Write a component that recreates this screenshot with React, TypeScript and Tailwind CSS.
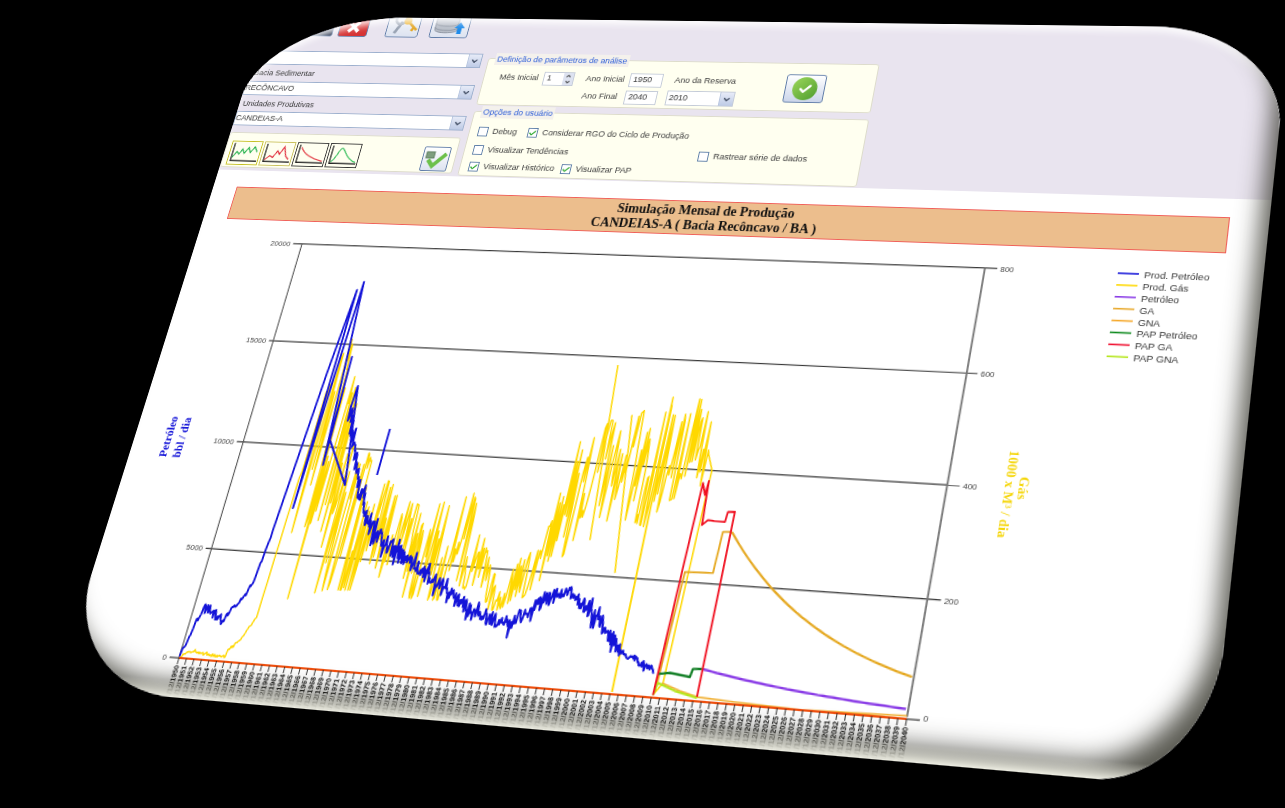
import React from "react";
import { ChevronDown, ChevronUp, Check } from "lucide-react";

type Pt = [number, number];

// flat card size and the four corners it lands on in the photo
const W = 1100;
const H = 730;
const quad: Pt[] = [[267, 16], [1290, 28], [1209, 789], [56, 687]];

const getHomography = () => {
    const [[x0, y0], [x1, y1], [x2, y2], [x3, y3]] = quad;
    const dx1 = x1 - x2, dx2 = x3 - x2, sx = x0 - x1 + x2 - x3;
    const dy1 = y1 - y2, dy2 = y3 - y2, sy = y0 - y1 + y2 - y3;
    const den = dx1 * dy2 - dx2 * dy1;
    const g = (sx * dy2 - dx2 * sy) / den;
    const h = (dx1 * sy - sx * dy1) / den;
    return {
        a: x1 - x0 + g * x1, b: x3 - x0 + h * x3, c: x0,
        d: y1 - y0 + g * y1, e: y3 - y0 + h * y3, f: y0, g, h,
    };
};

const T = getHomography();
const cardMatrix = `matrix3d(${[
    T.a / W, T.d / W, 0, T.g / W,
    T.b / H, T.e / H, 0, T.h / H,
    0, 0, 1, 0,
    T.c, T.f, 0, 1,
].join(",")})`;

// photo position -> position on the flat card
const flat = ([x, y]: Pt): Pt => {
    const p = T.a - T.g * x, q = T.b - T.h * x, r = x - T.c;
    const s = T.d - T.g * y, t = T.e - T.h * y, v = y - T.f;
    const den = p * t - q * s;
    return [((r * t - q * v) / den) * W, ((p * v - r * s) / den) * H];
};

let seed = 20;
const rnd = () => {
    seed = (seed * 16807) % 2147483647;
    return seed / 2147483647;
};

const toPath = (pts: Pt[]) => pts.map((p) => `${p[0].toFixed(1)},${p[1].toFixed(1)}`).join(" ");
const line = (pts: Pt[]) => toPath(pts.map(flat));

const interp = (pts: Pt[], x: number) => {
    if (x <= pts[0][0]) return pts[0][1];
    for (let i = 1; i < pts.length; i++) {
        if (x <= pts[i][0]) {
            const k = (x - pts[i - 1][0]) / (pts[i][0] - pts[i - 1][0] || 1);
            return pts[i - 1][1] + (pts[i][1] - pts[i - 1][1]) * k;
        }
    }
    return pts[pts.length - 1][1];
};

const sorted = (pts: Pt[]) => pts.map(flat).sort((a, b) => a[0] - b[0]);

const jagged = (anchors: Pt[], amp: number, step = 0.8): Pt[] => {
    const pts = sorted(anchors);
    const out: Pt[] = [];
    for (let x = pts[0][0]; x < pts[pts.length - 1][0]; x += step) {
        const spike = rnd() > 0.85 ? 1.8 : 1;
        out.push([x, interp(pts, x) + (rnd() - 0.5) * 2 * amp * spike]);
    }
    return out;
};

const band = (upper: Pt[], lower: Pt[], step = 1): Pt[] => {
    const up = sorted(upper);
    const low = sorted(lower);
    const out: Pt[] = [];
    const end = Math.min(up[up.length - 1][0], low[low.length - 1][0]);
    let i = 0;
    for (let x = Math.max(up[0][0], low[0][0]); x < end; x += step) {
        const slow = Math.sin(i * 0.21) * 0.2 + Math.sin(i * 0.067) * 0.16;
        const k = Math.min(1, Math.max(0, 0.5 + slow + (rnd() - 0.5) * 1.1));
        out.push([x, interp(low, x) + (interp(up, x) - interp(low, x)) * k]);
        i++;
    }
    return out;
};

// exponential decay between two photo positions
const decay = (from: Pt, to: Pt, k: number): string => {
    const a = flat(from);
    const b = flat(to);
    const out: Pt[] = [];
    for (let i = 0; i <= 40; i++) {
        const t = i / 40;
        out.push([a[0] + (b[0] - a[0]) * t, a[1] + (b[1] - a[1]) * ((1 - Math.exp(-k * t)) / (1 - Math.exp(-k)))]);
    }
    return toPath(out);
};

const bluePath = [
    ...jagged([[180, 655], [188, 640], [196, 622], [205, 608], [213, 612], [222, 622]], 5),
    ...jagged([[222, 622], [232, 608], [245, 596], [253, 582], [262, 560], [272, 534]], 3),
    ...[[273, 530], [327, 373], [357, 290], [293, 508], [364, 282], [323, 465], [352, 357], [330, 440], [345, 485], [358, 386], [350, 410]].map((p) => flat(p as Pt)),
    ...jagged([[350, 410], [352, 440], [358, 480], [366, 515], [375, 535], [400, 555]], 9),
    ...jagged([[400, 555], [430, 578], [470, 610], [510, 625], [530, 610], [545, 600], [570, 590], [590, 610], [620, 650]], 7),
    ...jagged([[620, 650], [655, 672]], 3.5),
];

const yellowPath = [
    ...jagged([[180, 657], [190, 651], [205, 654], [225, 657], [228, 650], [240, 640], [257, 617]], 1.2),
    ...band(
        [[258, 612], [275, 530], [300, 440], [325, 395], [352, 335], [358, 420], [375, 470], [400, 490], [425, 510], [450, 500], [470, 475], [490, 560], [505, 590], [530, 530], [555, 505], [575, 445], [600, 430], [612, 420], [625, 430], [650, 405], [680, 395], [705, 400], [714, 430]],
        [[258, 625], [275, 590], [290, 600], [325, 590], [360, 590], [390, 595], [420, 600], [460, 600], [490, 610], [510, 610], [530, 590], [560, 560], [580, 530], [610, 520], [630, 520], [650, 530], [670, 500], [700, 490], [714, 470]],
    ),
    ...[[712, 470], [680, 610], [663, 683], [653, 695]].map((p) => flat(p as Pt)),
];

const series = [
    { color: "#FFD800", width: 1.5, points: toPath(yellowPath) },
    { color: "#FFD800", width: 1.8, points: line([[612, 692], [672, 405]]) },
    { color: "#FFD800", width: 1.5, points: line([[615, 573], [632, 415]]) },
    { color: "#FFD800", width: 1.5, points: line([[618, 365], [590, 540]]) },
    { color: "#1414D8", width: 2, points: toPath(bluePath) },
    { color: "#1414D8", width: 2, points: line([[377, 475], [390, 429]]) },
    { color: "#E5A820", width: 1.8, points: line([[655, 692], [685, 572], [713, 573], [723, 532], [732, 532]]) },
    { color: "#E5A820", width: 2, points: decay([732, 532], [912, 677], 1.6) },
    { color: "#F2B33A", width: 1.6, points: line([[662, 683], [680, 691], [697, 697], [733, 702], [800, 710], [907, 716]]) },
    { color: "#8A3CE6", width: 2.2, points: decay([702, 669], [906, 709], 1.2) },
    { color: "#B5E61D", width: 2, points: line([[653, 695], [658, 683], [675, 691], [697, 698]]) },
    { color: "#137F26", width: 2.2, points: line([[658, 674], [670, 673], [690, 677], [693, 669], [702, 669]]) },
    { color: "#F01020", width: 1.8, points: line([[653, 695], [703, 483], [705, 495], [709, 481], [702, 525], [708, 520], [714, 521], [725, 522], [728, 512], [735, 512], [697, 697]]) },
];

const gridLeft: Pt[] = [[302, 244], [278, 341], [246, 442], [215, 549], [179, 658]];
const gridRight: Pt[] = [[985, 268], [965, 373], [947, 485], [928, 599], [907, 717]];
const leftLabels = ["20000", "15000", "10000", "5000", "0"];
const rightLabels = ["800", "600", "400", "200", "0"];

const legend = [
    { label: "Prod. Petróleo", color: "#1414D8" },
    { label: "Prod. Gás", color: "#FFD800" },
    { label: "Petróleo", color: "#8A3CE6" },
    { label: "GA", color: "#E8A92D" },
    { label: "GNA", color: "#F5A82A" },
    { label: "PAP Petróleo", color: "#0E8A1E" },
    { label: "PAP GA", color: "#F01030" },
    { label: "PAP GNA", color: "#B5E61D" },
];

const years = Array.from({ length: 91 }, (_, i) => 1950 + i);

const ProductionChart = () => {
    const [x0, axisY] = flat([179, 658]);
    const [x1] = flat([907, 717]);
    const tick = (x1 - x0) / 90;

    return (
        <svg viewBox={`0 240 ${W} ${H - 240}`} className="block h-[490px] w-full" style={{ fontFamily: '"Liberation Sans", Arial, sans-serif' }}>
            {gridLeft.map((p, i) => {
                const a = flat(p);
                const b = flat(gridRight[i]);
                return (
                    <g key={leftLabels[i]}>
                        {i < 4 && <line x1={a[0] - 10} y1={a[1]} x2={b[0] + 12} y2={b[1]} stroke="#3a3a3a" strokeWidth="1.2" />}
                        <text x={a[0] - 13} y={a[1] + 3} textAnchor="end" fontSize="8" fill="#444">{leftLabels[i]}</text>
                        <text x={b[0] + 15} y={b[1] + 3} fontSize="8" fill="#444">{rightLabels[i]}</text>
                    </g>
                );
            })}
            <polyline points={line([gridLeft[0], gridLeft[4]])} fill="none" stroke="#555" strokeWidth="1.2" />
            <polyline points={line([gridRight[0], gridRight[4]])} fill="none" stroke="#777" strokeWidth="1.8" />

            {series.map((s, i) => (
                <polyline key={i} points={s.points} fill="none" stroke={s.color} strokeWidth={s.width} strokeLinejoin="round" />
            ))}

            <line x1={x0 - 10} y1={axisY} x2={x0} y2={axisY} stroke="#3a3a3a" strokeWidth="1.2" />
            <line x1={x1} y1={axisY} x2={x1 + 12} y2={axisY} stroke="#3a3a3a" strokeWidth="1.2" />
            <line x1={x0} y1={axisY} x2={x1} y2={axisY} stroke="#F0500F" strokeWidth="2" />
            {years.map((year, i) => {
                const x = x0 + tick * i;
                return (
                    <g key={year}>
                        <line x1={x} y1={axisY} x2={x} y2={axisY + 6} stroke="#222" strokeWidth="0.9" />
                        <text x={x + 2.6} y={axisY + 7} textAnchor="end" fontSize="7" fontWeight="700" fill="#111" transform={`rotate(-90 ${x + 2.6} ${axisY + 7})`}>
                            {`31/12/${year}`}
                        </text>
                    </g>
                );
            })}

            <g fill="#1414D8" fontSize="12" fontWeight="700" textAnchor="middle" style={{ fontFamily: '"Liberation Serif", serif' }}>
                <text x="41" y="477" transform="rotate(-90 41 477)">Petróleo</text>
                <text x="56" y="477" transform="rotate(-90 56 477)">bbl / dia</text>
            </g>
            <g fill="#F5D60A" fontSize="13" fontWeight="700" textAnchor="middle" style={{ fontFamily: '"Liberation Serif", serif' }}>
                <text x="900" y="478" transform="rotate(90 900 478)">Gás</text>
                <text x="887" y="484" transform="rotate(90 887 484)">1000 x M³ / dia</text>
            </g>

            {legend.map((item, i) => (
                <g key={item.label}>
                    <line x1="964" y1={264 + i * 11.9} x2="984" y2={264 + i * 11.9} stroke={item.color} strokeWidth="1.6" />
                    <text x="989" y={268 + i * 11.9} fontSize="9.6" fill="#333">{item.label}</text>
                </g>
            ))}
        </svg>
    );
};

const ToolButton = ({ children, className = "" }: { children?: React.ReactNode; className?: string }) => (
    <button className={`flex h-[38px] items-center justify-center overflow-hidden rounded-[3px] border border-[#5F7CA8] ${className}`}>
        {children}
    </button>
);

const Combo = ({ value = "", className = "" }: { value?: string; className?: string }) => (
    <div className={`flex h-[17px] items-center justify-between border border-[#9DB0CE] bg-white text-[9px] text-[#333] ${className}`}>
        <span>{value}</span>
        <span className="flex h-full w-[15px] items-center justify-center border-l border-[#B9C7E0] bg-gradient-to-b from-[#E8ECF8] to-[#BECBE6]">
            <ChevronDown size={10} strokeWidth={3.5} color="#39465C" />
        </span>
    </div>
);

const Field = ({ value, className = "" }: { value: string; className?: string }) => (
    <div className={`flex h-[16px] items-center border border-[#C4CBD8] bg-white pl-[3px] text-[#333] ${className}`}>{value}</div>
);

const CheckItem = ({ label, checked = false, className = "" }: { label: string; checked?: boolean; className?: string }) => (
    <label className={`flex items-center gap-[5px] leading-[11px] ${className}`}>
        <span className="flex h-[11px] w-[11px] shrink-0 items-center justify-center border border-[#5E7FA8] bg-white">
            {checked && <Check size={10} strokeWidth={3.5} color="#23A323" />}
        </span>
        {label}
    </label>
);

const GroupBox = ({ title, className = "", children }: { title: string; className?: string; children: React.ReactNode }) => (
    <div className={`relative rounded-[3px] border border-[#DDDCCB] bg-[#FFFFF0] ${className}`}>
        <span className="absolute -top-[7px] left-[7px] bg-[#F4F1EC] px-[2px] text-[9.2px] leading-[14px] text-[#2A5BD7]">{title}</span>
        {children}
    </div>
);

const thumbs = [
    { border: "border-[#C4BE20]", stroke: "#22B04A", d: "M3 18 L7 11 L10 14 L13 8 L16 13 L20 6 L23 12 L27 5 L31 11" },
    { border: "border-[#C9C05A]", stroke: "#E02A3A", d: "M3 20 L8 15 L12 17 L16 9 L19 13 L23 4 L27 15 L31 19" },
    { border: "border-[#333]", stroke: "#E0303A", d: "M4 4 C9 12 18 17 32 20" },
    { border: "border-[#333]", stroke: "#2DBB55", d: "M3 20 C8 19 10 4 13 4 C17 4 20 18 32 20" },
];

const AppHeader = () => (
    <header className="flex h-[184px] shrink-0 flex-col bg-[#E9E4EF]" style={{ fontFamily: '"Liberation Sans", Arial, sans-serif' }}>
        <div className="flex h-[24px] items-end pl-[50px]">
            <ToolButton className="w-[34px] bg-[#1E2A44]" />
            <ToolButton className="ml-[6px] w-[34px] bg-[#D63434]">
                <svg width="16" height="16" viewBox="0 0 14 14" className="mt-[14px]"><path d="M2 2 L12 12 M12 2 L2 12" stroke="#fff" strokeWidth="3.5" /></svg>
            </ToolButton>
            <ToolButton className="ml-[21px] w-[38px] bg-gradient-to-b from-white to-[#DDE3F0]">
                <svg width="34" height="34" viewBox="0 0 34 34" className="-mt-[2px]">
                    <path d="M8 32 L15 18" stroke="#9AA4B4" strokeWidth="3.5" />
                    <circle cx="13" cy="15" r="6" fill="none" stroke="#A9B2BF" strokeWidth="3" />
                    <circle cx="21" cy="17" r="4.5" fill="#F0B93A" />
                    <path d="M24 20 L33 28 M29 25 L27 29" stroke="#E4A92A" strokeWidth="3" />
                </svg>
            </ToolButton>
            <ToolButton className="ml-[13px] w-[44px] bg-gradient-to-b from-white to-[#DDE3F0]">
                <svg width="40" height="34" viewBox="0 0 40 34">
                    <ellipse cx="16" cy="11" rx="13" ry="5" fill="#C7CCD4" stroke="#8B93A0" />
                    <path d="M3 11 V26 C3 31 29 31 29 26 V11" fill="#B9BFC9" stroke="#8B93A0" />
                    <path d="M3 18 C3 23 29 23 29 18" fill="none" stroke="#8B93A0" />
                    <path d="M3 23 C3 28 29 28 29 23" fill="none" stroke="#8B93A0" />
                    <path d="M25 24 L31 17 L37 24 H33.5 V31 H28.5 V24 Z" fill="#1E8BEA" />
                </svg>
            </ToolButton>
        </div>
        <div className="flex flex-1 gap-[7px]">
            <div className="flex w-[264px] flex-col pt-[18px] text-[9px] text-[#3a3a3a]">
                <Combo />
                <div className="flex h-[20px] items-center pl-[6px] pt-[2px]">Bacia Sedimentar</div>
                <Combo value="RECÔNCAVO" />
                <div className="flex h-[19px] items-center pl-[4px] pt-[2px]">Unidades Produtivas</div>
                <Combo value="CANDEIAS-A" />
                <div className="mt-[8px] flex h-[41px] items-center rounded-[3px] border border-[#DDDCCB] bg-[#FFFFF0] pl-[5px] pr-[6px]">
                    {thumbs.map((t) => (
                        <span key={t.d} className={`mr-[2px] mt-[6px] flex h-[28px] w-[36px] items-center justify-center border-[1.5px] ${t.border}`}>
                            <svg width="33" height="25" viewBox="0 0 34 24">
                                <path d="M2 1 V22 H33" fill="none" stroke="#222" strokeWidth="1.4" />
                                <path d={t.d} fill="none" stroke={t.stroke} strokeWidth="1.3" />
                            </svg>
                        </span>
                    ))}
                    <button className="ml-auto mt-[8px] flex h-[28px] w-[30px] items-center justify-center rounded-[2px] border border-[#5F7CA8] bg-gradient-to-b from-white to-[#DDE3F0]">
                        <svg width="26" height="22" viewBox="0 0 26 22">
                            <rect x="2" y="3" width="9" height="7" fill="#7E9E7E" stroke="#5F7F5F" />
                            <path d="M5 12 L11 19 L24 5" fill="none" stroke="#6CC04A" strokeWidth="4.5" />
                        </svg>
                    </button>
                </div>
            </div>
            <div className="flex w-[424px] flex-col pt-[23px] text-[9.2px] text-[#3a3a3a]">
                <GroupBox title="Definição de parâmetros de análise" className="flex h-[55px] items-center pl-[17px] pt-[11px]">
                    <div className="flex w-[262px] flex-col gap-[3px]">
                        <div className="flex items-center">
                            <span className="w-[49px]">Mês Inicial</span>
                            <div className="flex h-[16px] w-[34px] items-center justify-between border border-[#C4CBD8] bg-white pl-[3px]">
                                1
                                <span className="flex w-[11px] flex-col items-center bg-[#DDE2F0]">
                                    <ChevronUp size={7} strokeWidth={4} />
                                    <ChevronDown size={7} strokeWidth={4} />
                                </span>
                            </div>
                            <span className="ml-[13px] w-[48px]">Ano Inicial</span>
                            <Field value="1950" className="w-[36px]" />
                            <span className="ml-[13px] whitespace-nowrap">Ano da Reserva</span>
                        </div>
                        <div className="flex items-center pl-[96px]">
                            <span className="w-[47px]">Ano Final</span>
                            <Field value="2040" className="w-[35px]" />
                            <Combo value="2010" className="ml-[10px] w-[73px] border-[#C4CBD8] pl-[2px] text-[9.2px]" />
                        </div>
                    </div>
                    <button className="-mt-[8px] ml-[50px] flex h-[32px] w-[42px] items-center justify-center rounded-[3px] border border-[#5F7CA8] bg-gradient-to-b from-white to-[#CBD5EA]">
                        <span className="flex h-[26px] w-[26px] items-center justify-center rounded-full bg-gradient-to-br from-[#9BD65A] to-[#4E9E2E]">
                            <Check size={15} strokeWidth={4} color="#fff" />
                        </span>
                    </button>
                </GroupBox>
                <GroupBox title="Opções do usuário" className="mt-[7px] flex h-[74px] flex-col gap-[8px] pl-[9px] pt-[17px]">
                    <div className="flex items-center">
                        <CheckItem label="Debug" className="w-[55px]" />
                        <CheckItem label="Considerar RGO do Ciclo de Produção" checked />
                    </div>
                    <div className="flex items-center">
                        <CheckItem label="Visualizar Tendências" className="w-[244px]" />
                        <CheckItem label="Rastrear série de dados" className="mt-[3px]" />
                    </div>
                    <div className="-mt-[1px] flex items-center">
                        <CheckItem label="Visualizar Histórico" checked className="w-[101px]" />
                        <CheckItem label="Visualizar PAP" checked />
                    </div>
                </GroupBox>
            </div>
        </div>
    </header>
);

export default function App() {
    return (
        <div className="relative h-[808px] w-[1285px] overflow-hidden bg-black">
            <div
                className="absolute left-0 top-0 flex h-[730px] w-[1100px] origin-top-left flex-col overflow-hidden rounded-tl-[170px_100px] rounded-tr-[135px_110px] rounded-br-[100px_125px] rounded-bl-[125px_110px] bg-white blur-[0.35px]"
                style={{ transform: cardMatrix }}
            >
                <AppHeader />
                <section className="flex flex-1 flex-col pt-[19px]">
                    <div
                        className="ml-[27px] flex h-[37px] w-[1036px] shrink-0 flex-col items-center justify-center border border-[#F0605A] bg-[#ECBE8D] text-[13.8px] font-bold leading-[16px] text-[#111]"
                        style={{ fontFamily: '"Liberation Serif", serif' }}
                    >
                        <span>Simulação Mensal de Produção</span>
                        <span>CANDEIAS-A ( Bacia Recôncavo / BA )</span>
                    </div>
                    <ProductionChart />
                </section>
                <div className="pointer-events-none absolute inset-0 rounded-[inherit] shadow-[inset_-16px_-22px_22px_-8px_rgba(50,50,40,0.8),inset_0_7px_8px_-2px_rgba(255,255,255,0.9)]" />
                <div className="pointer-events-none absolute inset-x-0 bottom-0 h-[16px] bg-gradient-to-b from-transparent to-[#EFEFE4]" />
            </div>
        </div>
    );
}
